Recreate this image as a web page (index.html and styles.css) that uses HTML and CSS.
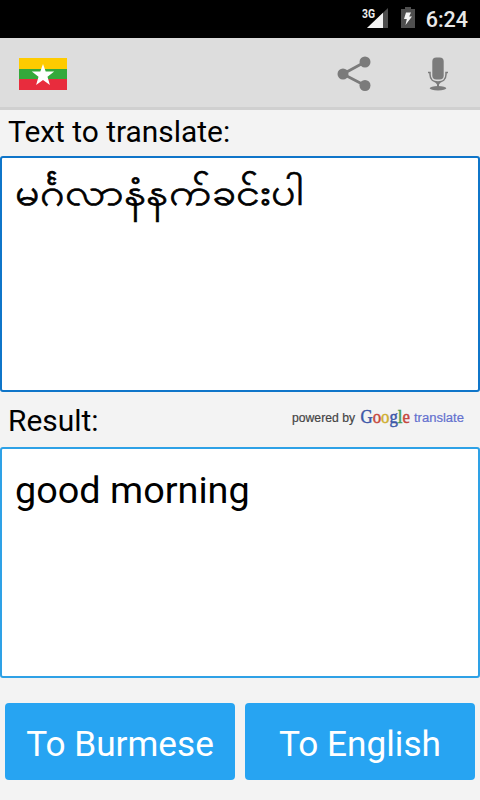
FILE: index.html
```html
<!DOCTYPE html>
<html lang="en">
<head>
<meta charset="utf-8">
<title>Burmese English Translator</title>
<link rel="stylesheet" href="styles.css">
</head>
<body>
<div class="status">
  <svg class="signal" width="27" height="24" viewBox="0 0 27 24">
    <path d="M26 0v20H5z" fill="#4d4d4d"/>
    <path d="M21 4.800V20H5z" fill="#f2f2f2"/>
    <rect width="13.500" height="11" fill="#000"/>
    <text class="network" x="0" y="9.500" textLength="13" lengthAdjust="spacingAndGlyphs">3G</text>
  </svg>
  <svg class="battery" width="14" height="21" viewBox="0 0 14 21">
    <path d="M4 0h6v2h4v19H0V2h4z" fill="#4f4f4f"/>
    <path d="M5 5.500h5L8.200 9.500H11L4.500 18l1.300-6H3z" fill="#f5f5f5"/>
  </svg>
  <span class="clock">6:24</span>
</div>
<header class="bar">
  <svg class="flag" width="48" height="32" viewBox="0 0 48 32">
    <path fill="#fecb00" d="M0 0h48v11H0z"/>
    <path fill="#34a93b" d="M0 11h48v10H0z"/>
    <path fill="#e82c3d" d="M0 21h48v11H0z"/>
    <path fill="#fff" d="M24 6l2.700 7.500 8.500.1-6.700 5.100 2.400 8.200-6.900-4.900-6.900 4.900 2.400-8.200-6.700-5.100 8.500-.1z"/>
  </svg>
  <svg class="share" width="34" height="36" viewBox="0 0 34 36">
    <path d="M28 6L6 18l22 11.500" fill="none" stroke="#7b7b7b" stroke-width="2.800"/>
    <g fill="#7b7b7b"><circle cx="28" cy="6" r="5.500"/><circle cx="6" cy="18" r="5.500"/><circle cx="28" cy="29.500" r="5.500"/></g>
  </svg>
  <svg class="mic" width="22" height="34" viewBox="0 0 22 34">
    <rect x="5.300" y="0.500" width="11.400" height="22" rx="4" fill="#7b7b7b"/>
    <path d="M1 15.500h2v2c0 5 3.500 7.500 8 7.500s8-2.500 8-7.500v-2h2" fill="none" stroke="#7b7b7b" stroke-width="1.500"/>
    <path d="M8 25h6l-2 2.500v2.500h-2v-2.500z" fill="#7b7b7b"/>
    <ellipse cx="11" cy="31.300" rx="8.300" ry="2.200" fill="#7b7b7b"/>
  </svg>
</header>
<main>
  <div class="label source-label">Text to translate:</div>
  <div class="box source"><span class="burmese" lang="my">မင်္ဂလာနံနက်ခင်းပါ</span></div>
  <div class="label result-label">
    <span>Result:</span>
    <svg class="powered" width="174" height="24" viewBox="0 0 174 24">
      <text class="small" x="0" y="16" textLength="63" lengthAdjust="spacingAndGlyphs">powered by</text>
      <text class="google" x="68.500" y="17" textLength="49.500" lengthAdjust="spacingAndGlyphs"><tspan class="blue">G</tspan><tspan class="red">o</tspan><tspan class="yellow">o</tspan><tspan class="blue">g</tspan><tspan class="green">l</tspan><tspan class="red">e</tspan></text>
      <text class="small translate" x="122" y="15.500" textLength="50" lengthAdjust="spacingAndGlyphs">translate</text>
    </svg>
  </div>
  <div class="box result">good morning</div>
  <div class="actions">
    <button>To Burmese</button>
    <button>To English</button>
  </div>
</main>
</body>
</html>
```
FILE: styles.css
```css
* { box-sizing: border-box; }
body {
  margin: 0;
  width: 480px;
  height: 800px;
  overflow: hidden;
  background: #f3f3f3;
  color: #000;
  font-family: Roboto, "Noto Sans", sans-serif;
}
svg { display: block; flex: none; }
.status {
  height: 38px;
  background: #000;
  display: flex;
  align-items: flex-start;
  justify-content: flex-end;
  padding: 8px 12px 0 0;
}
.network { font: 700 12px Roboto, sans-serif; fill: #eee; }
.battery { margin: -1px 11px 0 12px; }
.clock {
  color: #e8e8e8;
  font-size: 21.5px;
  font-weight: 500;
  line-height: 24px;
}
.bar {
  height: 72px;
  background: #ddd;
  border-bottom: 3px solid #d0d0d0;
  display: flex;
  align-items: center;
  padding: 2px 31px 0 19px;
}
.share { margin-left: auto; }
.mic { margin-left: 56px; }
.label {
  display: flex;
  padding-left: 8px;
  font-size: 29.9px;
}
.source-label { height: 46px; line-height: 44px; }
.box {
  background: #fff;
  border: 2px solid #0f75c9;
  border-radius: 3px;
}
.source { height: 236px; padding: 4px 13px; }
.burmese {
  display: inline-block;
  font: 38px/56px "Noto Sans", sans-serif;
  transform: scaleX(1.132);
  transform-origin: left;
  -webkit-text-stroke: .7px #000;
}
.result-label {
  height: 55px;
  line-height: 57px;
  justify-content: space-between;
  padding-right: 14px;
}
.powered { margin-top: 14px; }
.small { font: 12.5px "Liberation Sans", sans-serif; fill: #444; stroke: #444; stroke-width: .2px; }
.translate { fill: #6370cf; stroke: #6370cf; }
.google { font: 19px "Liberation Serif", serif; stroke-width: .5px; }
.blue { fill: #3c57a8; stroke: #3c57a8; }
.red { fill: #c4463d; stroke: #c4463d; }
.yellow { fill: #cfae2e; stroke: #cfae2e; }
.green { fill: #4a9a50; stroke: #4a9a50; }
.result {
  height: 231px;
  border-color: #2ea1e6;
  padding: 18px 13px;
  font-size: 37.8px;
  line-height: 46px;
}
.actions {
  display: grid;
  grid-template-columns: 1fr 1fr;
  gap: 10px;
  padding: 25px 5px 0;
}
button {
  height: 77px;
  border: 0;
  border-radius: 4px;
  background: #27a4f2;
  color: #fff;
  font: 35.2px Roboto, sans-serif;
  padding: 4px 0 0;
}
```
